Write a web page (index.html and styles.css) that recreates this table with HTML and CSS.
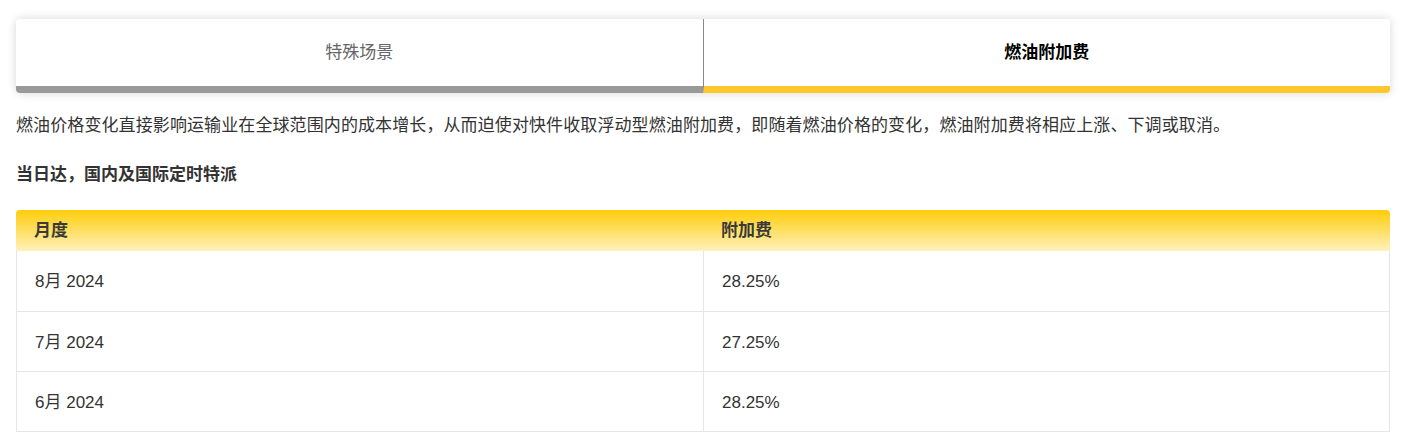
FILE: index.html
```html
<!DOCTYPE html>
<html lang="zh-CN">
<head>
<meta charset="utf-8">
<title>燃油附加费</title>
<link rel="stylesheet" href="styles.css">
</head>
<body>
<div class="tabs">
  <div class="tab">特殊场景</div>
  <div class="tab active">燃油附加费</div>
</div>
<p class="intro">燃油价格变化直接影响运输业在全球范围内的成本增长，从而迫使对快件收取浮动型燃油附加费，即随着燃油价格的变化，燃油附加费将相应上涨、下调或取消。</p>
<h3 class="sub">当日达，国内及国际定时特派</h3>
<table class="rates">
  <thead>
    <tr><th>月度</th><th>附加费</th></tr>
  </thead>
  <tbody>
    <tr><td>8月 2024</td><td>28.25%</td></tr>
    <tr><td>7月 2024</td><td>27.25%</td></tr>
    <tr><td>6月 2024</td><td>28.25%</td></tr>
  </tbody>
</table>
</body>
</html>
```
FILE: styles.css
```css
html, body {
  margin: 0;
  background: #fff;
}
body {
  padding: 19px 15px 0 16px;
  font-family: "Liberation Sans", "Noto Sans CJK SC", sans-serif;
  color: #333;
  font-size: 17px;
}
.tabs {
  display: flex;
  border-radius: 4px;
  box-shadow: 0 0 10px rgba(0, 0, 0, 0.16);
  overflow: hidden;
}
.tab {
  flex: 1;
  height: 67px;
  line-height: 67px;
  text-align: center;
  color: #666;
  background: #fff;
  border-bottom: 7px solid #999;
}
.tab + .tab {
  border-left: 1px solid #888;
}
.tab.active {
  color: #000;
  font-weight: bold;
  border-bottom-color: #fcc72c;
}
.intro {
  margin: 21px 0 0;
  line-height: 24px;
  letter-spacing: 0.1px;
}
.sub {
  margin: 25px 0 0;
  font-size: 17px;
  font-weight: bold;
  line-height: 24px;
}
.rates {
  margin-top: 23px;
  width: 100%;
  border-collapse: separate;
  border-spacing: 0;
  table-layout: fixed;
}
.rates th {
  text-align: left;
  font-weight: bold;
  color: #3a3a3a;
  height: 41px;
  line-height: 24px;
  padding: 0 18px;
  background: linear-gradient(#ffcd0a, #fff1bd);
}
.rates th:first-child { border-top-left-radius: 4px; }
.rates th:last-child { border-top-right-radius: 4px; }
.rates td {
  height: 57px;
  line-height: 24px;
  padding: 2px 18px 0;
  border-bottom: 1px solid #e6e6e6;
  color: #333;
}
.rates tr:first-child td { height: 58px; }
.rates td:first-child { border-left: 1px solid #e6e6e6; }
.rates td + td { border-left: 1px solid #e6e6e6; }
.rates td:last-child { border-right: 1px solid #e6e6e6; }
```
